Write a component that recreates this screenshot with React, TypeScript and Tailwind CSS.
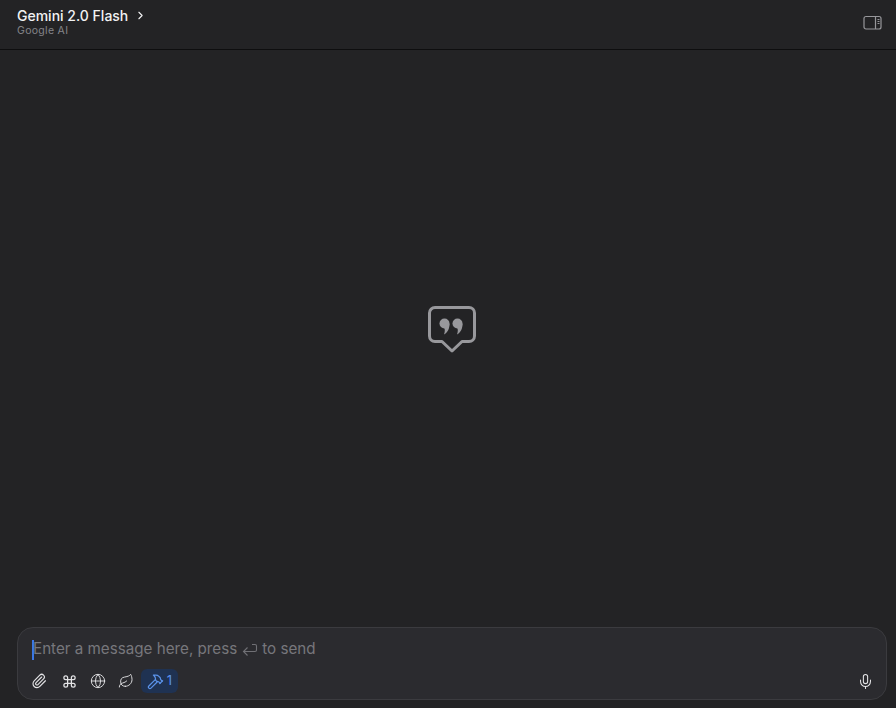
import { Paperclip, Command, Globe, Leaf, Hammer, Mic, ChevronRight } from "lucide-react";

export default function App() {
  return (
    <div className="flex h-[708px] w-[896px] flex-col overflow-hidden bg-[#232325] font-['Inter',sans-serif]">
      <header className="flex h-[50px] shrink-0 items-center justify-between border-b border-[#0e0e0f] pl-[17px] pr-[13px]">
        <div className="flex flex-col pb-[5px]">
          <div className="flex items-center gap-[6px] text-[14px] font-medium leading-[17px] text-[#f2f2f3]">
            Gemini 2.0 Flash
            <ChevronRight size={13} strokeWidth={2} />
          </div>
          <div className="text-[10.5px] leading-[13px] tracking-[0.3px] text-[#85858a]">Google AI</div>
        </div>
        <svg width="20" height="16" viewBox="0 0 20 16" fill="none" stroke="#97979b" strokeWidth="1.2" className="mb-[3px]">
          <rect x="1" y="1.500" width="17" height="12.500" rx="2" />
          <path d="M12.500 1.500v12.500" />
          <path d="M14.500 4.500h2M14.500 6.500h2M14.500 8.500h2" />
        </svg>
      </header>
      <main className="flex flex-1 items-center justify-center pb-[20px] pl-[8px]">
        <svg width="50" height="48" viewBox="0 0 50 48" fill="none">
          <path d="M8 2.500h34a5.500 5.500 0 0 1 5.500 5.500v23a5.500 5.500 0 0 1-5.500 5.500H35L25 46l-10-9.500H8A5.500 5.500 0 0 1 2.500 31V8A5.500 5.500 0 0 1 8 2.500Z" stroke="#98989c" strokeWidth="3" strokeLinejoin="round" />
          <circle cx="17.500" cy="18.500" r="5" fill="#98989c" />
          <path d="M22.500 18.500c.3 5-2 9-5.500 11 1-3 1-5 .3-6.500Z" fill="#98989c" />
          <circle cx="30.500" cy="18.500" r="5" fill="#98989c" />
          <path d="M35.500 18.500c.3 5-2 9-5.500 11 1-3 1-5 .3-6.500Z" fill="#98989c" />
        </svg>
      </main>
      <div className="pb-[8px] pl-[17px] pr-[9px]">
        <div className="flex h-[73px] flex-col rounded-[16px] border border-[#3b3b3f] bg-[#2b2b2f] pl-[9px] pr-[9px]">
          <div className="flex h-[40px] items-center pl-[5px] pt-[3px] text-[15.200px] text-[#77777c]">
            <span className="mr-[-1px] h-[20px] w-[2px] bg-[#3b78e7]" />
            Enter a message here, press
            <svg width="16" height="14" viewBox="0 0 16 14" fill="none" stroke="#707075" strokeWidth="1.100" className="mx-[4.500px]">
              <path d="M10 1.500h3a1.500 1.500 0 0 1 1.500 1.500v4A1.500 1.500 0 0 1 13 8.500H1.500" />
              <path d="M5.500 4.500l-4 4 4 4" />
            </svg>
            to send
          </div>
          <div className="flex items-center pt-[1px] text-[#e4e4e6]">
            <span className="flex w-[24px] justify-center"><Paperclip size={16} strokeWidth={1.700} /></span>
            <span className="ml-[6px] flex w-[24px] justify-center"><Command size={15} strokeWidth={2} /></span>
            <span className="ml-[5px] flex w-[24px] justify-center"><Globe size={16} strokeWidth={1.400} /></span>
            <span className="ml-[4px] flex w-[24px] justify-center"><Leaf size={16} strokeWidth={1.400} /></span>
            <span className="ml-[3px] flex h-[24px] w-[37px] items-center justify-center gap-[3px] rounded-[6px] bg-[#1f3252] text-[13px] text-[#5b93ea]">
              <Hammer size={17} strokeWidth={1.700} />1
            </span>
            <span className="ml-auto flex w-[24px] justify-center"><Mic size={17} strokeWidth={1.500} /></span>
          </div>
        </div>
      </div>
    </div>
  );
}
